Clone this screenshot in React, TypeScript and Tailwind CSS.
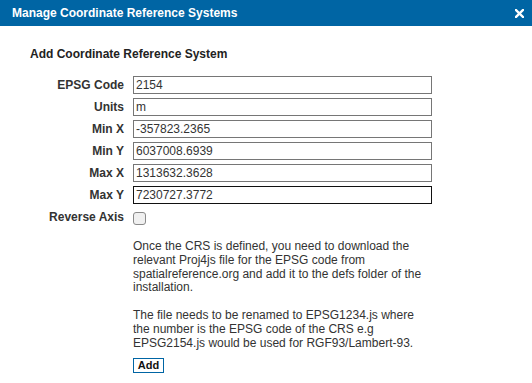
import React from "react";

const fields: [string, string][] = [
  ["EPSG Code", "2154"],
  ["Units", "m"],
  ["Min X", "-357823.2365"],
  ["Min Y", "6037008.6939"],
  ["Max X", "1313632.3628"],
  ["Max Y", "7230727.3772"],
];

export default function App() {
  return (
    <div className="w-[532px] h-[383px] bg-white text-[#333] overflow-hidden" style={{ fontFamily: '"Liberation Sans", Arial, sans-serif' }}>
      <div className="h-[26px] bg-[#0065a4] flex items-center justify-between pl-[12px] pr-[8px]">
        <span className="text-white font-bold text-[12px] leading-none">Manage Coordinate Reference Systems</span>
        <svg width="9" height="9" viewBox="0 0 9 9">
          <path d="M1 1 L8 8 M8 1 L1 8" stroke="white" strokeWidth="2.4" strokeLinecap="square" />
        </svg>
      </div>
      <div className="pl-[30px] pt-[21px]">
        <div className="font-bold text-[12px] leading-[15px] text-[#222]">Add Coordinate Reference System</div>
      </div>
      <div className="mt-[14px] grid grid-cols-[124px_299px] gap-x-[9px] gap-y-[4px] items-center">
        {fields.map(([label, value], i) => (
          <React.Fragment key={label}>
            <div className="text-right font-bold text-[12px] leading-[15px] text-[#333]">{label}</div>
            <div
              className={`h-[18px] border ${i === 5 ? "border-[#111]" : "border-[#767676]"} flex items-center pl-[2px] text-[12px] text-[#333] leading-none`}
            >
              {value}
            </div>
          </React.Fragment>
        ))}
        <div className="text-right font-bold text-[12px] leading-[15px] text-[#333] mt-[2px]">Reverse Axis</div>
        <div className="mt-[3px]">
          <div className="w-[13px] h-[13px] rounded-[3px] border border-[#8a8a8a] bg-[#f0f0f0]" />
        </div>
      </div>
      <div className="ml-[133px] w-[300px] mt-[15px] text-[12px] leading-[13.8px] text-[#333]">
        <p>
          Once the CRS is defined, you need to download the relevant Proj4js file for the EPSG code from spatialreference.org and add it to the defs folder of the installation.
        </p>
        <p className="mt-[14px]">
          The file needs to be renamed to EPSG1234.js where the number is the EPSG code of the CRS e.g EPSG2154.js would be used for RGF93/Lambert-93.
        </p>
        <button className="mt-[7px] w-[31px] h-[15px] border border-[#0065a4] bg-white font-bold text-[11px] leading-none text-[#111] flex items-center justify-center">
          Add
        </button>
      </div>
    </div>
  );
}
